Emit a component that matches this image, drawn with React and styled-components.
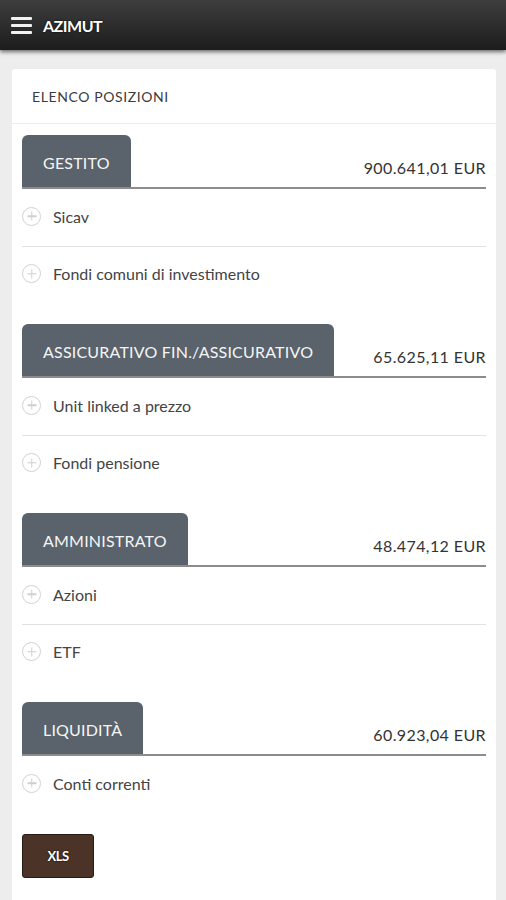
import React from "react";
import styled, { createGlobalStyle } from "styled-components";

const Global = createGlobalStyle`
  html, body { margin: 0; padding: 0; background: #ededed; }
  body { font-family: Lato, "Open Sans", sans-serif; }
  * { box-sizing: border-box; }
`;

const Header = styled.header`
  height: 50px;
  background: linear-gradient(#3e3e3e, #1c1c1c);
  box-shadow: 0 2px 4px rgba(0, 0, 0, 0.55);
  display: flex;
  align-items: center;
  gap: 11px;
  padding-left: 11px;
  position: relative;
  z-index: 1;
`;

const Burger = styled.div`
  width: 21px;
  display: flex;
  flex-direction: column;
  gap: 4px;
  & > span {
    display: block;
    height: 3px;
    background: #f2f2f2;
    border-radius: 1px;
  }
`;

const Brand = styled.div`
  color: #fff;
  font-size: 16px;
  font-weight: 700;
  letter-spacing: -0.5px;
  text-shadow: 0 0 2px #000;
`;

const Main = styled.main`
  padding: 19px 10px 0 12px;
`;

const Card = styled.section`
  background: #fff;
  border-radius: 3px;
  min-height: 840px;
`;

const CardTitle = styled.div`
  height: 55px;
  display: flex;
  align-items: center;
  padding-left: 20px;
  font-size: 14px;
  color: #3c3c3c;
  letter-spacing: 0.6px;
  border-bottom: 1px solid #ececec;
`;

const Body = styled.div`
  padding: 11px 10px 20px 10px;
`;

const Section = styled.div`
  margin-bottom: 21px;
`;

const SectionHead = styled.div`
  display: flex;
  align-items: flex-end;
  justify-content: space-between;
  border-bottom: 2px solid #8c8c8c;
`;

const Tab = styled.div`
  height: 52px;
  display: flex;
  align-items: center;
  padding: 2px 21px 0 21px;
  background: #5a636b;
  border-radius: 6px 6px 0 0;
  color: #f5f5f5;
  font-size: 16px;
  letter-spacing: 0.2px;
`;

const Amount = styled.div`
  font-size: 16px;
  color: #333;
  padding-bottom: 10px;
  letter-spacing: 0.4px;
`;

const Row = styled.div`
  height: 57px;
  display: flex;
  align-items: center;
  gap: 12px;
  padding-bottom: 3px;
  font-size: 16px;
  color: #444;
  & + & {
    border-top: 1px solid #e2e2e2;
  }
`;

const Plus = styled.span`
  width: 19px;
  height: 19px;
  border-radius: 50%;
  border: 1.5px solid #d2d2d2;
  position: relative;
  flex: none;
  &::before,
  &::after {
    content: "";
    position: absolute;
    background: #cfcfcf;
    left: 50%;
    top: 50%;
    transform: translate(-50%, -50%);
  }
  &::before { width: 9px; height: 1.5px; }
  &::after { width: 1.5px; height: 9px; }
`;

const XlsButton = styled.button`
  width: 72px;
  height: 44px;
  background: #4b3427;
  border: 1px solid #2a1b12;
  border-radius: 3px;
  color: #fff;
  font-family: Lato, sans-serif;
  font-size: 13px;
  font-weight: 700;
  letter-spacing: -0.5px;
  text-shadow: 0 0 2px #000;
`;

const sections = [
  { name: "GESTITO", amount: "900.641,01 EUR", items: ["Sicav", "Fondi comuni di investimento"] },
  { name: "ASSICURATIVO FIN./ASSICURATIVO", amount: "65.625,11 EUR", items: ["Unit linked a prezzo", "Fondi pensione"] },
  { name: "AMMINISTRATO", amount: "48.474,12 EUR", items: ["Azioni", "ETF"] },
  { name: "LIQUIDITÀ", amount: "60.923,04 EUR", items: ["Conti correnti"] },
];

export default function App() {
  return (
    <>
      <Global />
      <Header>
        <Burger>
          <span />
          <span />
          <span />
        </Burger>
        <Brand>AZIMUT</Brand>
      </Header>
      <Main>
        <Card>
          <CardTitle>ELENCO POSIZIONI</CardTitle>
          <Body>
            {sections.map((s) => (
              <Section key={s.name}>
                <SectionHead>
                  <Tab>{s.name}</Tab>
                  <Amount>{s.amount}</Amount>
                </SectionHead>
                {s.items.map((it) => (
                  <Row key={it}>
                    <Plus />
                    {it}
                  </Row>
                ))}
              </Section>
            ))}
            <XlsButton>XLS</XlsButton>
          </Body>
        </Card>
      </Main>
    </>
  );
}
